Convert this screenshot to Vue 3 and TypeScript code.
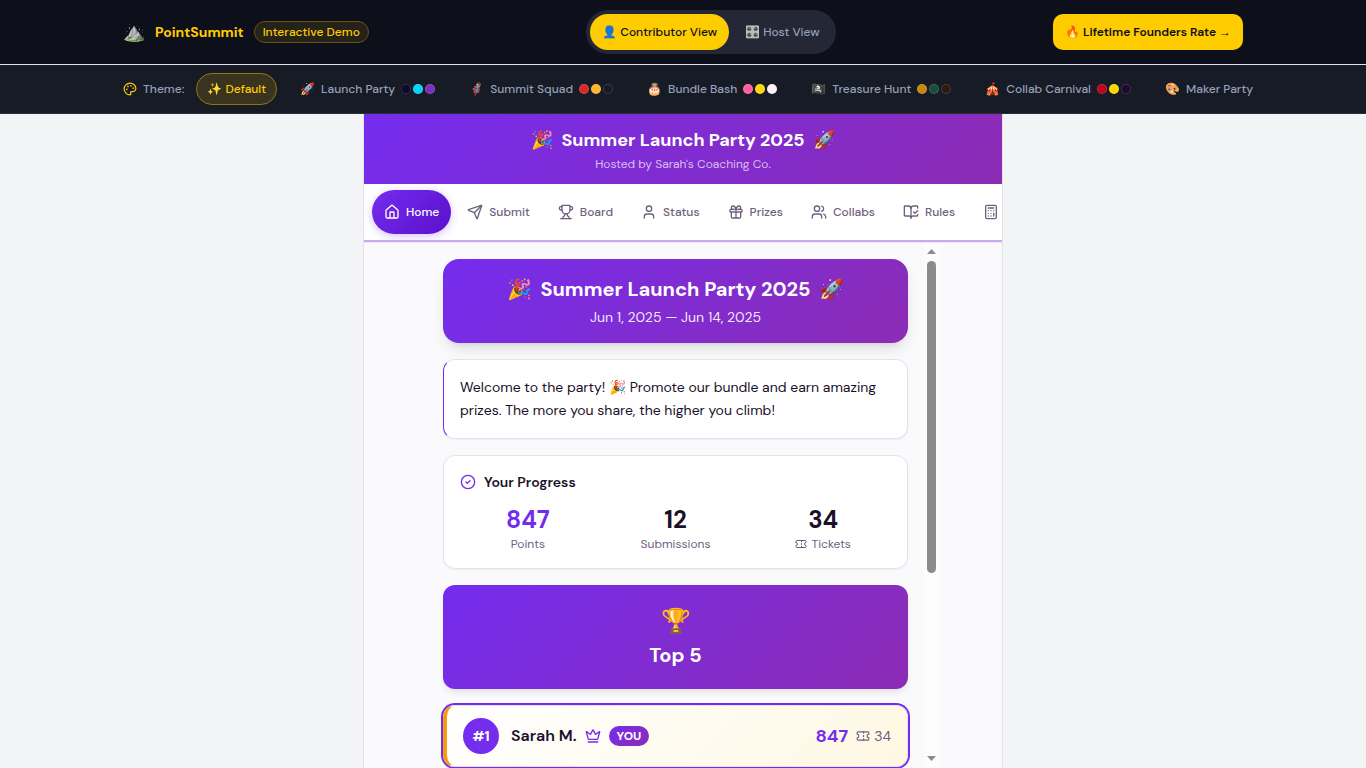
<script setup lang="ts">
import { ref } from 'vue'

interface Theme { emoji: string; name: string; colors: string[] }
interface Tab { name: string; iconOnly?: boolean; paths: string[] }

const view = ref<'contributor' | 'host'>('contributor')
const theme = ref('Default')
const tab = ref('Home')

const themes: Theme[] = [
  { emoji: '🚀', name: 'Launch Party', colors: ['#0a0a2e', '#00d4ff', '#7b2fbe'] },
  { emoji: '🦸', name: 'Summit Squad', colors: ['#d62828', '#fcb72b', '#1a1a2e'] },
  { emoji: '🎂', name: 'Bundle Bash', colors: ['#ff5fa2', '#ffd60a', '#fff0f6'] },
  { emoji: '🏴‍☠️', name: 'Treasure Hunt', colors: ['#c8860a', '#1b4d3e', '#2c1a0e'] },
  { emoji: '🎪', name: 'Collab Carnival', colors: ['#c1001f', '#ffd700', '#1e0a2e'] },
  { emoji: '🎨', name: 'Maker Party', colors: ['#e76f51', '#2a9d8f', '#fefae0'] },
]

const tabs: Tab[] = [
  { name: 'Home', paths: ['M15 21v-8a1 1 0 0 0-1-1h-4a1 1 0 0 0-1 1v8', 'M3 10a2 2 0 0 1 .709-1.528l7-5.999a2 2 0 0 1 2.582 0l7 5.999A2 2 0 0 1 21 10v9a2 2 0 0 1-2 2H5a2 2 0 0 1-2-2z'] },
  { name: 'Submit', paths: ['M14.536 21.686a.5.5 0 0 0 .937-.024l6.5-19a.496.496 0 0 0-.635-.635l-19 6.5a.5.5 0 0 0-.024.937l7.93 3.18a2 2 0 0 1 1.112 1.11z', 'm21.854 2.147-10.94 10.939'] },
  { name: 'Board', paths: ['M6 9H4.5a2.5 2.5 0 0 1 0-5H6', 'M18 9h1.5a2.5 2.5 0 0 0 0-5H18', 'M4 22h16', 'M10 14.66V17c0 .55-.47.98-.97 1.21C7.85 18.75 7 20.24 7 22', 'M14 14.66V17c0 .55.47.98.97 1.21C16.15 18.75 17 20.24 17 22', 'M18 2H6v7a6 6 0 0 0 12 0V2Z'] },
  { name: 'Status', paths: ['M19 21v-2a4 4 0 0 0-4-4H9a4 4 0 0 0-4 4v2', 'M16 7a4 4 0 1 1-8 0a4 4 0 0 1 8 0z'] },
  { name: 'Prizes', paths: ['M4 8h16a1 1 0 0 1 1 1v2a1 1 0 0 1-1 1H4a1 1 0 0 1-1-1V9a1 1 0 0 1 1-1z', 'M12 8v13', 'M19 12v7a2 2 0 0 1-2 2H7a2 2 0 0 1-2-2v-7', 'M7.5 8a2.5 2.5 0 0 1 0-5A4.8 8 0 0 1 12 8a4.8 8 0 0 1 4.5-5 2.5 2.5 0 0 1 0 5'] },
  { name: 'Collabs', paths: ['M16 21v-2a4 4 0 0 0-4-4H6a4 4 0 0 0-4 4v2', 'M13 7a4 4 0 1 1-8 0a4 4 0 0 1 8 0z', 'M22 21v-2a4 4 0 0 0-3-3.87', 'M16 3.13a4 4 0 0 1 0 7.75'] },
  { name: 'Rules', paths: ['M12 21V7', 'm16 12 2 2 4-4', 'M22 6V4a1 1 0 0 0-1-1h-5a4 4 0 0 0-4 4 4 4 0 0 0-4-4H3a1 1 0 0 0-1 1v13a1 1 0 0 0 1 1h6a3 3 0 0 1 3 3 3 3 0 0 1 3-3h6a1 1 0 0 0 1-1v-1.3'] },
  { name: 'Calculator', iconOnly: true, paths: ['M6 2h12a2 2 0 0 1 2 2v16a2 2 0 0 1-2 2H6a2 2 0 0 1-2-2V4a2 2 0 0 1 2-2z', 'M8 6h8', 'M16 14v4', 'M16 10h.01', 'M12 10h.01', 'M8 10h.01', 'M12 14h.01', 'M8 14h.01', 'M12 18h.01', 'M8 18h.01'] },
]

const ticketPaths = ['M2 9a3 3 0 0 1 0 6v2a2 2 0 0 0 2 2h16a2 2 0 0 0 2-2v-2a3 3 0 0 1 0-6V7a2 2 0 0 0-2-2H4a2 2 0 0 0-2 2Z', 'M13 5v2', 'M13 17v2', 'M13 11v2']
</script>

<template>
  <div class="page">
    <header class="topbar">
      <div class="topbar-inner">
        <div class="brand">
          <span class="brand-mark">⛰️</span>
          <span class="brand-name">PointSummit</span>
          <span class="badge">Interactive Demo</span>
        </div>
        <div class="switch">
          <button type="button" :class="{ on: view === 'contributor' }" @click="view = 'contributor'">👤 Contributor View</button>
          <button type="button" :class="{ on: view === 'host' }" @click="view = 'host'">🎛️ Host View</button>
        </div>
        <a class="cta" href="#">🔥 Lifetime Founders Rate <span class="cta-arrow">→</span></a>
      </div>
    </header>

    <div class="themebar">
      <div class="themebar-inner">
        <span class="theme-label">
          <svg class="icon s14" viewBox="0 0 24 24">
            <path d="M12 2C6.5 2 2 6.5 2 12s4.500 10 10 10c.926 0 1.648-.746 1.648-1.688 0-.437-.18-.835-.437-1.125-.29-.289-.438-.652-.438-1.125a1.640 1.640 0 0 1 1.668-1.668h1.996c3.051 0 5.555-2.503 5.555-5.554C21.965 6.012 17.461 2 12 2z" />
            <circle class="dot" cx="13.500" cy="6.500" r=".5" /><circle class="dot" cx="17.500" cy="10.500" r=".5" />
            <circle class="dot" cx="8.500" cy="7.500" r=".5" /><circle class="dot" cx="6.500" cy="12.500" r=".5" />
          </svg>
          Theme:
        </span>
        <button type="button" class="theme" :class="{ on: theme === 'Default' }" @click="theme = 'Default'">✨ Default</button>
        <button v-for="t in themes" :key="t.name" type="button" class="theme" :class="{ on: theme === t.name }" @click="theme = t.name">
          <span>{{ t.emoji }}</span>
          <span>{{ t.name }}</span>
          <span class="swatches"><i v-for="c in t.colors" :key="c" :style="{ background: c }"></i></span>
        </button>
      </div>
    </div>

    <div class="panel">
      <div class="event">
        <h1><span>🎉</span><span>Summer Launch Party 2025</span><span>🚀</span></h1>
        <p>Hosted by Sarah's Coaching Co.</p>
      </div>

      <nav class="tabs">
        <button v-for="t in tabs" :key="t.name" type="button" :aria-label="t.name" :class="{ on: tab === t.name }" @click="tab = t.name">
          <svg class="icon s16" viewBox="0 0 24 24"><path v-for="p in t.paths" :key="p" :d="p" /></svg>
          <span v-if="!t.iconOnly">{{ t.name }}</span>
        </button>
      </nav>

      <div class="scroller">
        <main class="feed">
          <section class="card hero">
            <h2><span>🎉</span><span>Summer Launch Party 2025</span><span>🚀</span></h2>
            <p>Jun 1, 2025 — Jun 14, 2025</p>
          </section>

          <section class="card welcome">
            Welcome to the party! 🎉 Promote our bundle and earn amazing prizes. The more you share, the higher you climb!
          </section>

          <section class="card progress">
            <h3>
              <svg class="icon s16" viewBox="0 0 24 24"><circle cx="12" cy="12" r="10" /><path d="m9 12 2 2 4-4" /></svg>
              Your Progress
            </h3>
            <div class="stats">
              <div><strong class="accent">847</strong><span>Points</span></div>
              <div><strong>12</strong><span>Submissions</span></div>
              <div>
                <strong>34</strong>
                <span><svg class="icon s12" viewBox="0 0 24 24"><path v-for="p in ticketPaths" :key="p" :d="p" /></svg>Tickets</span>
              </div>
            </div>
          </section>

          <section class="card top">
            <div class="trophy">🏆</div>
            <h2>Top 5</h2>
          </section>

          <section class="card leader">
            <span class="rank">#1</span>
            <span class="name">Sarah M.</span>
            <svg class="icon s16 crown" viewBox="0 0 24 24">
              <path d="M11.562 3.266a.5.5 0 0 1 .876 0L15.390 8.870a1 1 0 0 0 1.516.294L21.183 5.500a.5.5 0 0 1 .798.519l-2.834 10.246a1 1 0 0 1-.956.734H5.810a1 1 0 0 1-.957-.734L2.020 6.020a.5.5 0 0 1 .798-.519l4.276 3.664a1 1 0 0 0 1.516-.294z" />
              <path d="M5 21h14" />
            </svg>
            <span class="you">YOU</span>
            <span class="score">847</span>
            <span class="tickets"><svg class="icon s14" viewBox="0 0 24 24"><path v-for="p in ticketPaths" :key="p" :d="p" /></svg>34</span>
          </section>
        </main>
        <div class="scrollbar" aria-hidden="true">
          <svg class="arrow" viewBox="0 0 9 5"><path d="M0 5 4.500 0 9 5z" /></svg>
          <div class="track"><div class="thumb"></div></div>
          <svg class="arrow" viewBox="0 0 9 5"><path d="M0 0 4.500 5 9 0z" /></svg>
        </div>
      </div>
    </div>
  </div>
</template>

<style>
body { margin: 0; background: #f3f4f6; }
</style>

<style scoped>
* { box-sizing: border-box; }
h1, h2, h3, p { margin: 0; }
button { font: inherit; color: inherit; border: 0; background: none; padding: 0; cursor: pointer; white-space: nowrap; }

.page {
  height: 100vh;
  display: flex;
  flex-direction: column;
  overflow: hidden;
  font-family: "DM Sans", "Liberation Sans", sans-serif;
  font-size: 12px;
  line-height: 16px;
  color: #1a1028;
}
.icon { flex: none; fill: none; stroke: currentColor; stroke-width: 2; stroke-linecap: round; stroke-linejoin: round; }
.s12 { width: 12px; height: 12px; }
.s14 { width: 14px; height: 14px; }
.s16 { width: 16px; height: 16px; }

.topbar { flex: none; background: #0d0f1a; border-bottom: 1px solid #e4e2ec; }
.topbar-inner {
  max-width: 1152px; height: 64px; margin: 0 auto; padding: 0 16px;
  display: flex; justify-content: space-between; align-items: center;
}
.brand { display: flex; align-items: center; gap: 10px; }
.brand-mark { font-size: 18px; line-height: 28px; }
.brand-name { font-size: 14px; line-height: 20px; font-weight: 700; color: #ffcc00; }
.badge { padding: 2px 8px; border: 1px solid #665410; border-radius: 12px; background: #25221a; color: #ffcc00; font-weight: 500; }
.switch { display: flex; gap: 4px; padding: 4px; border-radius: 22px; background: #242735; color: #94a0b8; font-weight: 500; }
.switch button { height: 36px; padding: 0 12px; border-radius: 18px; }
.switch .on { background: #ffcc00; color: #0d0f1a; }
.cta {
  padding: 10px 12px; border-radius: 10px; background: #ffcc00; color: #0d0f1a;
  font-weight: 600; text-decoration: none; white-space: nowrap;
}
.cta-arrow { font-family: "Liberation Sans", sans-serif; }

.themebar { flex: none; background: #171b26; border-bottom: 1px solid #2b2f3b; color: #94a0b8; font-weight: 500; }
.themebar-inner { max-width: 1152px; height: 48px; margin: 0 auto; padding: 0 16px; display: flex; align-items: center; gap: 12px; overflow: hidden; }
.theme-label { flex: none; display: flex; align-items: center; gap: 6px; }
.theme-label .icon { color: #ffcc00; }
.dot { fill: currentColor; }
.theme { flex: none; height: 32px; padding: 0 10px; border: 1px solid transparent; border-radius: 16px; display: flex; align-items: center; gap: 6px; }
.theme.on { background: #3a3320; border-color: #8f7615; color: #ffcc00; }
.swatches { display: flex; gap: 2px; }
.swatches i { width: 10px; height: 10px; border-radius: 50%; border: 1px solid rgba(255, 255, 255, 0.15); }

.panel {
  flex: 1; min-height: 0; width: 100%; max-width: 640px; margin: 0 auto;
  display: flex; flex-direction: column;
  background: #fafafc; border: 1px solid #e4e2ec; border-width: 0 1px;
}
.event, .hero, .top { background: linear-gradient(135deg, #742cee, #8c2cb4); color: #fff; text-align: center; }
.event { flex: none; padding: 12px; }
h1, .hero h2 { display: flex; justify-content: center; gap: 8px; font-weight: 700; line-height: 28px; }
h1 { font-size: 18px; margin-bottom: 2px; }
.event p { color: rgba(255, 255, 255, 0.7); }

.tabs { flex: none; display: flex; gap: 4px; padding: 6px 8px; overflow: hidden; background: #fff; border-bottom: 2px solid #cba9ee; box-shadow: 0 1px #ebe7f3; margin-bottom: 1px; }
.tabs button { flex: none; height: 44px; padding: 0 12px; display: flex; align-items: center; gap: 6px; border-radius: 22px; color: #6e6180; font-weight: 500; }
.tabs .on { color: #fff; background: linear-gradient(135deg, #742cee, #5a10cc); box-shadow: 0 2px 8px rgba(116, 44, 238, 0.3); }

.scroller { flex: 1; min-height: 0; width: 100%; max-width: 512px; margin: 0 auto; display: flex; }
.feed { flex: 1; min-width: 0; padding: 16px; overflow-y: auto; }
.scrollbar { flex: none; width: 15px; padding: 6px 3px 7px; background: #fcfcfc; display: flex; flex-direction: column; gap: 7px; }
.arrow { flex: none; width: 9px; height: 5px; fill: #8b8b8b; }
.track { flex: 1; min-height: 0; }
.thumb { height: 64%; border-radius: 5px; background: #8b8b8b; }

.card { border-radius: 12px; margin-bottom: 16px; }
.hero { padding: 16px; border-radius: 16px; box-shadow: 0 8px 15px -3px rgba(0, 0, 0, 0.12), 0 4px 6px -4px rgba(0, 0, 0, 0.1); }
.hero h2 { font-size: 20px; margin-bottom: 4px; }
.hero p { font-size: 14px; line-height: 20px; color: rgba(255, 255, 255, 0.9); }

.welcome, .progress { padding: 16px; background: #fff; border: 1px solid #e4e2ec; box-shadow: 0 1px 2px rgba(0, 0, 0, 0.05); }
.welcome { border-left-color: #742cee; font-size: 14px; line-height: 23px; }
h3 { display: flex; align-items: center; gap: 8px; font-size: 14px; line-height: 20px; font-weight: 600; margin-bottom: 12px; }
h3 .icon, .accent, .crown, .score { color: #742cee; }
.stats { display: grid; grid-template-columns: repeat(3, 1fr); gap: 12px; }
.stats div { display: flex; flex-direction: column; align-items: center; }
.stats strong { font-size: 24px; line-height: 32px; font-weight: 700; }
.stats span { display: flex; align-items: center; gap: 4px; color: #6e6180; }

.top { padding: 20px; box-shadow: 0 4px 6px -1px rgba(0, 0, 0, 0.1); }
.trophy { font-size: 24px; line-height: 32px; margin-bottom: 4px; }
.top h2 { font-size: 20px; line-height: 28px; font-weight: 700; }

.leader {
  display: flex; align-items: center; gap: 8px; padding: 12px 16px;
  border: 1px solid #e4e2ec; border-left: 4px solid #f59e0b; box-shadow: 0 0 0 2px #742cee;
  background: linear-gradient(135deg, #fff, #fef7e2);
}
.rank { width: 36px; height: 36px; margin-right: 4px; border-radius: 50%; background: #742cee; color: #fff; font-size: 14px; line-height: 36px; font-weight: 700; text-align: center; }
.name { font-size: 16px; line-height: 24px; font-weight: 600; }
.you { padding: 2px 8px; border-radius: 10px; background: linear-gradient(135deg, #742cee, #8c2cb4); color: #fff; font-weight: 700; }
.score { margin-left: auto; font-size: 18px; line-height: 28px; font-weight: 700; }
.tickets { display: flex; align-items: center; gap: 4px; font-size: 14px; color: #6e6180; }
</style>
